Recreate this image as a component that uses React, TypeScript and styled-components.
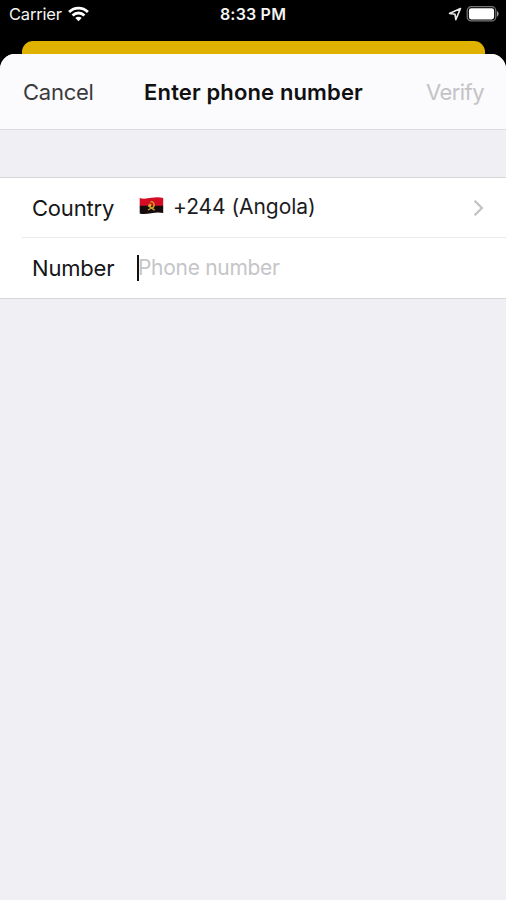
import React from "react";
import styled, { createGlobalStyle } from "styled-components";

const GlobalStyle = createGlobalStyle`
  * { box-sizing: border-box; }
  body { margin: 0; background: #000; font-family: Inter, Roboto, sans-serif; }
`;

const Screen = styled.div`
  width: 506px;
  height: 900px;
  display: flex;
  flex-direction: column;
  overflow: hidden;
  background: #000;
`;

const StatusBar = styled.header`
  flex: 0 0 41px;
  display: grid;
  grid-template-columns: 1fr auto 1fr;
  align-items: start;
  padding: 4px 7px 0 9px;
  color: #f4f4f4;
  line-height: 21px;
`;

const StatusGroup = styled.div<{ $end?: boolean }>`
  display: flex;
  align-items: center;
  height: 21px;
  gap: ${(p) => (p.$end ? "4px" : "6px")};
  justify-content: ${(p) => (p.$end ? "flex-end" : "flex-start")};
  svg { margin-top: -2px; }
`;

const Carrier = styled.span`
  font-size: 16.5px;
  letter-spacing: -0.2px;
`;

const Clock = styled.time`
  font-size: 16px;
  font-weight: 600;
  letter-spacing: 0.2px;
  margin-right: 2px;
`;

const BackCard = styled.div`
  flex: 0 0 13px;
  margin: 0 21px 0 22px;
  border-radius: 11px 11px 0 0;
  background: #e0b200;
`;

const Sheet = styled.main`
  flex: 1;
  display: flex;
  flex-direction: column;
  border-radius: 15px 15px 0 0;
  overflow: hidden;
  background: #efeff4;
`;

const NavBar = styled.nav`
  flex: 0 0 76px;
  display: grid;
  grid-template-columns: 1fr auto 1fr;
  align-items: center;
  padding: 1px 22px 0 23px;
  background: #fbfafc;
  border-bottom: 1px solid #dcdbdf;
`;

const NavButton = styled.button<{ $muted?: boolean }>`
  border: 0;
  padding: 0;
  background: none;
  font: 400 22px/28px Inter, sans-serif;
  letter-spacing: ${(p) => (p.$muted ? "-0.55px" : "-0.25px")};
  justify-self: ${(p) => (p.$muted ? "end" : "start")};
  color: ${(p) => (p.$muted ? "#c3c3c6" : "#3a3a3c")};
`;

const Title = styled.h1`
  margin: 0;
  font-size: 22px;
  line-height: 28px;
  font-weight: 600;
  letter-spacing: 0.13px;
  color: #101012;
`;

const Form = styled.section`
  margin-top: 47px;
  background: #fff;
  border-top: 1px solid #d7d7da;
  border-bottom: 1px solid #d7d7da;
`;

const Row = styled.div`
  display: flex;
  align-items: center;
  height: 59px;
  margin-left: 22px;
  padding: 0 22px 0 10px;
  & + & {
    height: 61px;
    padding-bottom: 1px;
    border-top: 1px solid #e9e9eb;
  }
`;

const Label = styled.span`
  flex: 0 0 105px;
  padding-top: 1px;
  font-size: 22px;
  line-height: 28px;
  letter-spacing: -0.2px;
  color: #161618;
`;

const Value = styled.div`
  flex: 1;
  display: flex;
  align-items: center;
  font-size: 21px;
  line-height: 28px;
  color: #1c1c1e;
`;

const Code = styled.span`
  margin: -1px 0 0 9px;
  letter-spacing: -0.05px;
`;

const Caret = styled.i`
  width: 2px;
  height: 26px;
  margin-right: -1px;
  background: #111;
`;

const Placeholder = styled.span`
  color: #c5c5c8;
  letter-spacing: -0.3px;
`;

const FlagSlot = styled.span`
  display: flex;
  margin: -4px 0 0 2px;
`;

const Wifi = () => (
  <svg width="21" height="16" viewBox="0 0 22 17">
    <g fill="none" stroke="#fff" strokeWidth="3">
      <path d="M1 6.3C6.7.8 15.3.8 21 6.3" />
      <path d="M4.7 10.1c3.7-3.5 8.9-3.5 12.6 0" />
    </g>
    <path d="M11 16.3 7.6 12.8c1.9-1.7 4.9-1.7 6.8 0z" fill="#fff" />
  </svg>
);

const LocationArrow = () => (
  <svg width="14" height="14" viewBox="0 0 14 14">
    <path d="M12.5 1.5 1.5 6.4l5.5.8.8 5.4z" fill="none" stroke="#e8e8e8" strokeWidth="1.6" strokeLinejoin="round" />
  </svg>
);

const Battery = () => (
  <svg width="33" height="16" viewBox="0 0 33 16">
    <rect x="1.2" y=".7" width="28.6" height="14.2" rx="4" fill="none" stroke="#777" strokeWidth="1.2" />
    <rect x="2.9" y="2.2" width="25.2" height="11.2" rx="2.3" fill="#fff" />
    <path d="M31 5.1c2.1 1.1 2.1 4.5 0 5.6z" fill="#999" />
  </svg>
);

const AngolaFlag = () => (
  <svg width="25" height="19" viewBox="0 0 25 19">
    <path d="M.7 2.1c4 1.2 7.5.4 11.5-.3s7.8-1 12 .1v8H.7z" fill="#d50d24" />
    <path d="M.7 9.7h23.5v7.4c-4.2-1-8-.5-12 .1s-7.5 1.4-11.5.3z" fill="#170c0d" />
    <path d="M11.5 6c4-1.2 5 4.7 1.3 6.6" fill="none" stroke="#c9a21b" strokeWidth="1.5" />
    <path d="m9.1 9.7 6.5 4.5M9 14l3.5-2" stroke="#cba725" strokeWidth="1.4" />
    <path d="m11 7.1.6 1.3 1.4.2-1 .9.3 1.4-1.3-.7-1.2.7.3-1.4-1-.9 1.3-.2z" fill="#edbd29" />
  </svg>
);

const Chevron = () => (
  <svg width="11" height="18" viewBox="0 0 11 18">
    <path d="m1.6 1.7 7.3 7.3-7.3 7.3" fill="none" stroke="#c2c2c5" strokeWidth="2.2" />
  </svg>
);

export default function App() {
  return (
    <>
      <GlobalStyle />
      <Screen>
        <StatusBar>
          <StatusGroup>
            <Carrier>Carrier</Carrier>
            <Wifi />
          </StatusGroup>
          <Clock>8:33 PM</Clock>
          <StatusGroup $end>
            <LocationArrow />
            <Battery />
          </StatusGroup>
        </StatusBar>
        <BackCard />
        <Sheet>
          <NavBar>
            <NavButton>Cancel</NavButton>
            <Title>Enter phone number</Title>
            <NavButton $muted>Verify</NavButton>
          </NavBar>
          <Form>
            <Row>
              <Label>Country</Label>
              <Value>
                <FlagSlot>
                  <AngolaFlag />
                </FlagSlot>
                <Code>+244 (Angola)</Code>
              </Value>
              <Chevron />
            </Row>
            <Row>
              <Label>Number</Label>
              <Value>
                <Caret />
                <Placeholder>Phone number</Placeholder>
              </Value>
            </Row>
          </Form>
        </Sheet>
      </Screen>
    </>
  );
}
